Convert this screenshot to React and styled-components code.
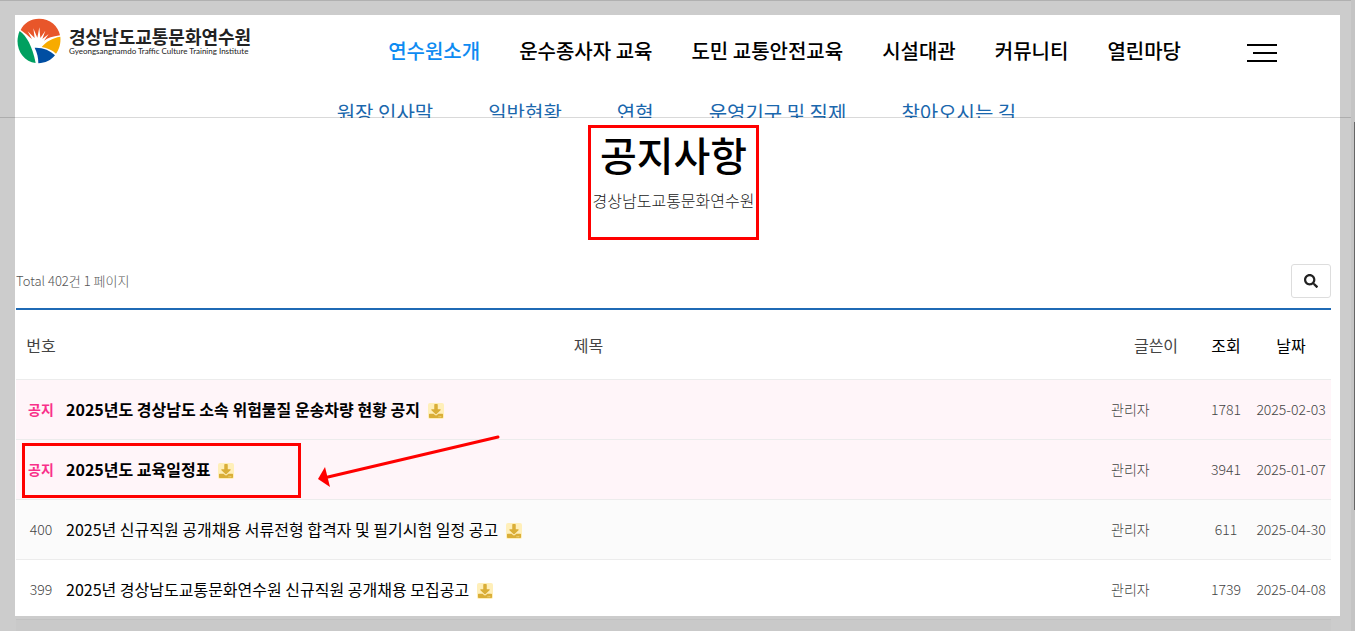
import React from 'react';
import styled, { createGlobalStyle } from 'styled-components';
import { FaDownload, FaSearch } from 'react-icons/fa';

const GlobalStyle = createGlobalStyle`
  * { box-sizing: border-box; }

  body {
    margin: 0;
    overflow: hidden;
    background: #ccc;
    font-family: 'Noto Sans CJK KR', 'Noto Sans KR', sans-serif;
    color: #000;
  }

  h1, p, ul { margin: 0; padding: 0; }
  ul { list-style: none; }
  a { color: inherit; text-decoration: none; }
`;

const Window = styled.div`
  display: flex;
  height: 100vh;
`;

const Page = styled.div`
  display: flex;
  flex: 1;
  flex-direction: column;
  min-width: 0;
  border-top: 1px solid #b0b0b0;
`;

const Scrollbar = styled.div`
  width: 4px;
  padding: 122px 0 121px 3px;
  background: #c4c4c4;
`;

const Thumb = styled.div`
  height: 100%;
  background: #666;
`;

const Header = styled.header`
  position: relative;
  padding: 14px 11px 0 15px;

  &::after {
    content: '';
    position: absolute;
    right: 0;
    bottom: 0;
    left: 0;
    height: 1px;
    background: rgba(0, 0, 0, 0.15);
  }
`;

const HeaderInner = styled.div`
  height: 103px;
  overflow: hidden;
  background: #fff;
`;

const TopBar = styled.div`
  display: flex;
  align-items: center;
  height: 74px;
  padding: 0 63px 0 2px;
`;

const Logo = styled.a`
  display: flex;
  align-items: center;
  gap: 8px;
  margin-bottom: 22px;
`;

const Brand = styled.span`
  display: flex;
  flex-direction: column;
  color: #222;
  white-space: nowrap;
`;

const BrandName = styled.strong`
  font-size: 18px;
  font-weight: 700;
  line-height: 20px;
`;

const BrandSub = styled.span`
  font-family: 'Liberation Sans Narrow', Lato, sans-serif;
  font-size: 8px;
  line-height: 10px;
`;

const Nav = styled.nav`
  margin-left: auto;
  margin-right: 66px;
`;

const NavList = styled.ul`
  display: flex;
  gap: 39px;
  padding-bottom: 2px;
`;

const NavLink = styled.a`
  font-size: 20px;
  font-weight: 500;
  line-height: 30px;
  white-space: nowrap;
  color: ${(props) => (props.$active ? '#0d8bf2' : '#000')};
`;

const MenuButton = styled.button`
  display: flex;
  flex-direction: column;
  align-items: flex-end;
  gap: 6px;
  padding: 2px 0 0;
  border: 0;
  background: none;
`;

const MenuBar = styled.span`
  width: ${(props) => (props.$short ? '24px' : '30px')};
  height: 2px;
  background: #000;
`;

const SubList = styled.ul`
  display: flex;
  justify-content: center;
  gap: 55px;
  padding: 9px 2px 0 0;
`;

const SubLink = styled.a`
  font-size: 20px;
  line-height: 30px;
  white-space: nowrap;
  color: #1a67ad;
`;

const Body = styled.main`
  flex: 1;
  min-height: 0;
  margin: 0 11px 3px 15px;
  padding: 7px 9px 0 1px;
  overflow: hidden;
  background: #fff;
`;

const Underlay = styled.div`
  height: 12px;
  margin: 0 20px 0 16px;
  border-top: 1px solid #c2c2c2;
  background: #c9c9c9;
`;

const Heading = styled.div`
  width: fit-content;
  margin: 0 auto;
  padding: 0 2px 21px;
  border: 3px solid #f00;
  text-align: center;
`;

const Title = styled.h1`
  font-size: 40px;
  font-weight: 500;
  line-height: 52px;
`;

const Subtitle = styled.p`
  padding-top: 4px;
  font-size: 16px;
  font-weight: 300;
  line-height: 32px;
  color: #222;
`;

const Toolbar = styled.div`
  display: flex;
  align-items: center;
  justify-content: space-between;
  margin: 24px 0 10px;
`;

const Total = styled.p`
  padding-bottom: 2px;
  font-size: 13px;
  font-weight: 300;
  color: #555;
`;

const SearchButton = styled.button`
  display: flex;
  align-items: center;
  justify-content: center;
  width: 40px;
  height: 34px;
  border: 1px solid #ddd;
  border-radius: 3px;
  background: #fff;
  color: #222;
  font-size: 14px;
`;

const Board = styled.div`
  position: relative;
`;

const Table = styled.table`
  width: 100%;
  border-top: 2px solid #1f6ab5;
  border-spacing: 0;
  table-layout: fixed;
`;

const Th = styled.th`
  width: ${(props) => props.$width || 'auto'};
  height: 70px;
  padding: 0;
  border-bottom: 1px solid #ececec;
  font-size: 16px;
  font-weight: 400;
  color: ${(props) => (props.$strong ? '#000' : '#444')};
`;

const Row = styled.tr`
  background: ${(props) => props.$bg};
`;

const Td = styled.td`
  height: 60px;
  padding: 0 0 2px;
  border-bottom: 1px solid #ececec;
  font-size: 14px;
  font-weight: 300;
  text-align: ${(props) => props.$align || 'center'};
  color: #444;
`;

const Notice = styled.strong`
  font-weight: 700;
  color: #f9308a;
`;

const Subject = styled.a`
  display: flex;
  align-items: center;
  gap: 8px;
  font-size: 16px;
  font-weight: ${(props) => (props.$bold ? 700 : 400)};
  line-height: 24px;
  color: #000;
`;

const FileIcon = styled.span`
  display: flex;
  align-items: center;
  justify-content: center;
  width: 16px;
  height: 16px;
  margin-top: 4px;
  border-radius: 2px;
  background: #ffefb9;
  color: #daae37;
  font-size: 14px;
`;

const Marker = styled.div`
  position: absolute;
  top: 135px;
  left: 6px;
  width: 279px;
  height: 55px;
  border: 3px solid #f00;
  pointer-events: none;
`;

const Arrow = styled.svg`
  position: absolute;
  top: 122px;
  left: 294px;
  pointer-events: none;
`;

const menus = ['연수원소개', '운수종사자 교육', '도민 교통안전교육', '시설대관', '커뮤니티', '열린마당'];
const subMenus = ['원장 인사말', '일반현황', '연혁', '운영기구 및 직제', '찾아오시는 길'];

const posts = [
  { id: 1, notice: true, title: '2025년도 경상남도 소속 위험물질 운송차량 현황 공지', hits: 1781, date: '2025-02-03', bg: '#fff5f9' },
  { id: 2, notice: true, title: '2025년도 교육일정표', hits: 3941, date: '2025-01-07', bg: '#fff5f9' },
  { id: 400, title: '2025년 신규직원 공개채용 서류전형 합격자 및 필기시험 일정 공고', hits: 611, date: '2025-04-30', bg: '#fbfbfb' },
  { id: 399, title: '2025년 경상남도교통문화연수원 신규직원 공개채용 모집공고', hits: 1739, date: '2025-04-08', bg: '#fff' },
];

const Emblem = () => (
  <svg width="44" height="46" viewBox="53 54 132 136" aria-hidden="true">
    <path
      fill="#e8562a"
      d="M64 89C74 68 94 55 119 55 152 55 177 77 182 105 160 108 145 113 134 121L148 101 129 116 138 91 123 113 120 81 114 112 102 84 106 113 85 93 98 116C88 108 76 98 64 89z"
    />
    <path fill="#00a060" d="M61 92c20 14 38 45 48 96-42-5-67-52-48-96z" />
    <path fill="#f7ab00" d="M183 109c2 19-3 37-13 51-11-10-25-17-43-20 13-16 32-27 56-31z" />
    <path fill="#004ea2" d="M106 142c25-1 46 8 61 23-12 15-29 23-50 24 0-17-3-31-11-47z" />
  </svg>
);

const App = () => (
  <Window>
    <GlobalStyle />
    <Page>
      <Header>
        <HeaderInner>
          <TopBar>
            <Logo href="#">
              <Emblem />
              <Brand>
                <BrandName>경상남도교통문화연수원</BrandName>
                <BrandSub>Gyeongsangnamdo Traffic Culture Training Institute</BrandSub>
              </Brand>
            </Logo>
            <Nav>
              <NavList>
                {menus.map((menu, i) => (
                  <li key={menu}>
                    <NavLink href="#" $active={i === 0}>{menu}</NavLink>
                  </li>
                ))}
              </NavList>
            </Nav>
            <MenuButton type="button" aria-label="전체메뉴">
              <MenuBar />
              <MenuBar $short />
              <MenuBar />
            </MenuButton>
          </TopBar>
          <SubList>
            {subMenus.map((menu) => (
              <li key={menu}>
                <SubLink href="#">{menu}</SubLink>
              </li>
            ))}
          </SubList>
        </HeaderInner>
      </Header>
      <Body>
        <Heading>
          <Title>공지사항</Title>
          <Subtitle>경상남도교통문화연수원</Subtitle>
        </Heading>
        <Toolbar>
          <Total>Total 402건 1 페이지</Total>
          <SearchButton type="button" aria-label="검색">
            <FaSearch />
          </SearchButton>
        </Toolbar>
        <Board>
          <Table>
            <thead>
              <tr>
                <Th $width="50px">번호</Th>
                <Th>제목</Th>
                <Th $width="90px">글쓴이</Th>
                <Th $width="50px" $strong>조회</Th>
                <Th $width="80px" $strong>날짜</Th>
              </tr>
            </thead>
            <tbody>
              {posts.map((post) => (
                <Row key={post.id} $bg={post.bg}>
                  <Td>{post.notice ? <Notice>공지</Notice> : post.id}</Td>
                  <Td $align="left">
                    <Subject href="#" $bold={post.notice}>
                      {post.title}
                      <FileIcon><FaDownload /></FileIcon>
                    </Subject>
                  </Td>
                  <Td $align="left">관리자</Td>
                  <Td>{post.hits}</Td>
                  <Td>{post.date}</Td>
                </Row>
              ))}
            </tbody>
          </Table>
          <Marker />
          <Arrow width="194" height="64" viewBox="0 0 194 64" aria-hidden="true">
            <path d="M188 7 18 47" stroke="#f00" strokeWidth="3" strokeLinecap="round" />
            <path d="M8 49 15 37 20 57z" fill="#f00" />
          </Arrow>
        </Board>
      </Body>
      <Underlay />
    </Page>
    <Scrollbar>
      <Thumb />
    </Scrollbar>
  </Window>
);

export default App;
